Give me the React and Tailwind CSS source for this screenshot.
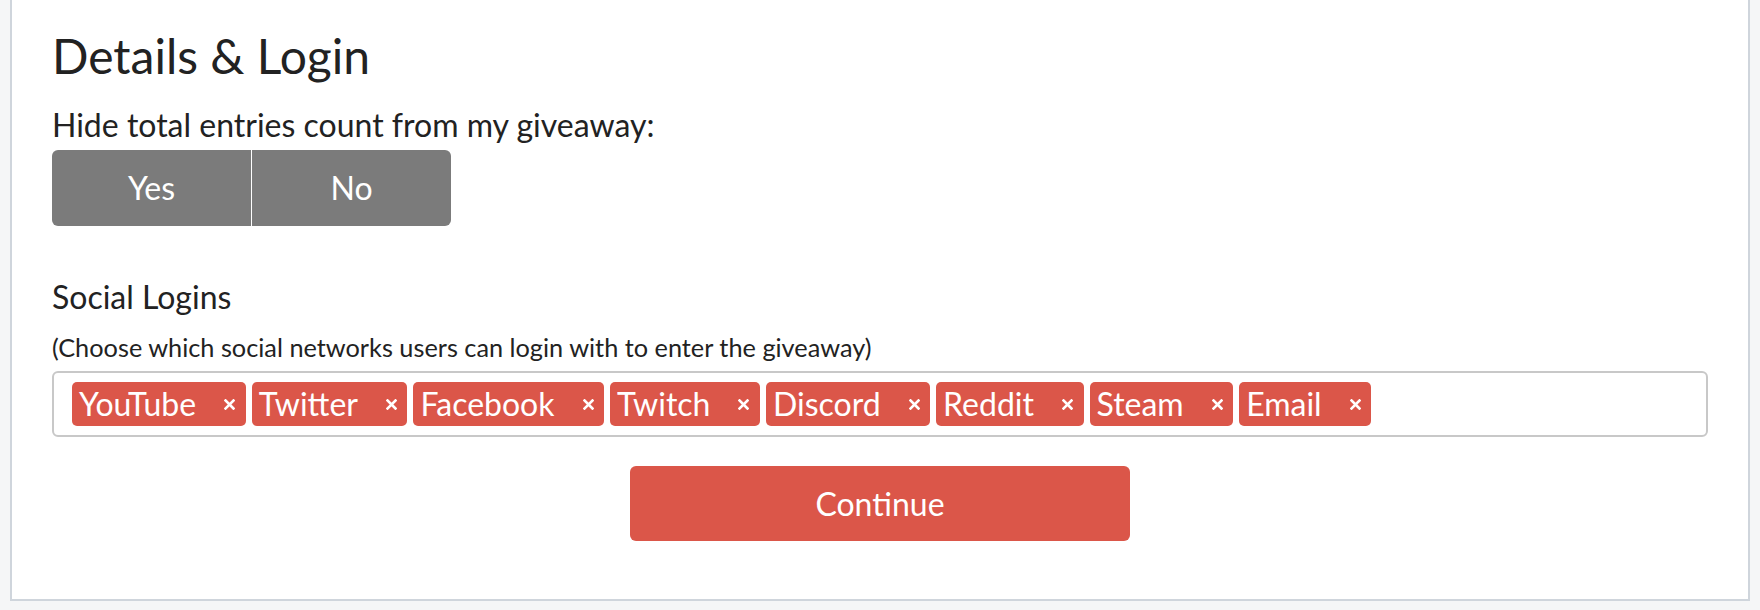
import React from "react";

const networks = ["YouTube", "Twitter", "Facebook", "Twitch", "Discord", "Reddit", "Steam", "Email"];

const CloseMark = () => (
  <svg width="11" height="11" viewBox="0 0 11 11" className="block">
    <path d="M1.5 1.5 L9.5 9.5 M9.5 1.5 L1.5 9.5" stroke="#ffffff" strokeWidth="2.6" strokeLinecap="square" />
  </svg>
);

const Tag = ({ label }) => (
  <div className="flex items-center h-[44px] rounded-[5px] bg-[#db5649] pl-[7px] pr-[10.5px] text-white">
    <span className="text-[32px] leading-[36px]">{label}</span>
    <span className="ml-[28px]">
      <CloseMark />
    </span>
  </div>
);

export default function App() {
  return (
    <div className="h-[610px] w-[1760px] bg-[#f5f6f7] font-['Lato',_'Liberation_Sans',_sans-serif] text-[#222222] overflow-hidden">
      <div className="ml-[10px] w-[1740px] h-[601px] bg-white border-l-2 border-r-2 border-b-2 border-[#cfd5dc] px-[40px] pt-[28px]">
        {/* Details & Login header */}
        <h1 className="text-[48px] leading-[56px] font-normal">Details &amp; Login</h1>

        <p className="mt-[22px] text-[32px] leading-[38px]">Hide total entries count from my giveaway:</p>
        <div className="mt-[6px] flex w-[399px] h-[76px] rounded-[6px] overflow-hidden text-white text-[32px]">
          <button className="flex-1 flex items-center justify-center bg-[#7b7b7b] border-r border-white">Yes</button>
          <button className="flex-1 flex items-center justify-center bg-[#7b7b7b]">No</button>
        </div>

        <h2 className="mt-[52px] text-[32px] leading-[38px] font-normal">Social Logins</h2>
        <p className="mt-[16px] text-[25.3px] leading-[31px]">
          (Choose which social networks users can login with to enter the giveaway)
        </p>

        <div className="mt-[8px] h-[66px] flex items-center gap-[6px] rounded-[6px] border-2 border-[#c8c8c8] pl-[18px]">
          {networks.map((n) => (
            <Tag key={n} label={n} />
          ))}
        </div>

        <div className="mt-[29px] flex justify-center">
          <button className="w-[500px] h-[75px] rounded-[6px] bg-[#db5649] text-white text-[32px]">Continue</button>
        </div>
      </div>
    </div>
  );
}
